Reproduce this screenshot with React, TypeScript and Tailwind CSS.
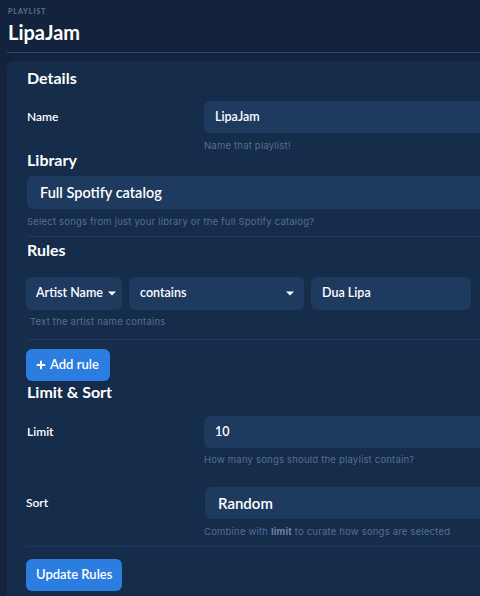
import { Plus } from "lucide-react";

function Caret() {
  return (
    <svg width="8" height="5" viewBox="0 0 8 5" className="shrink-0">
      <path d="M0 0.5 L8 0.5 L4 4.5 Z" fill="#ffffff" />
    </svg>
  );
}

function Helper({ children, className = "" }: { children: React.ReactNode; className?: string }) {
  return (
    <div
      className={`h-[12px] leading-[12px] font-['Inter',sans-serif] text-[9.5px] tracking-[0.2px] text-[#536f96] ${className}`}
    >
      {children}
    </div>
  );
}

function Heading({ children, className = "" }: { children: React.ReactNode; className?: string }) {
  return (
    <div className={`h-[18px] leading-[18px] text-[16px] font-bold text-white ${className}`}>{children}</div>
  );
}

function Divider({ className = "" }: { className?: string }) {
  return <div className={`border-t border-[#1f3a5e] ${className}`} />;
}

export default function App() {
  return (
    <div className="w-[480px] h-[596px] overflow-hidden bg-[#13233d] font-['Lato',sans-serif] text-white">
      <div className="pl-2 pt-[7px]">
        <div className="h-[8px] leading-[8px] text-[7px] font-bold tracking-[0.14em] text-[#5b7396]">
          PLAYLIST
        </div>
        <div className="mt-[5px] h-[24px] leading-[24px] text-[20px] font-bold">LipaJam</div>
      </div>
      <div className="ml-[7px] mt-[8px] border-t border-[#2a4775]" />

      <div className="ml-[7px] mt-2 w-[620px] rounded-md bg-[#152c4b] pl-5 pr-5 pb-6">
        <div className="pt-[8px]">
          <Heading>Details</Heading>
        </div>

        <div className="mt-[14px] grid grid-cols-[177px_1fr] items-center">
          <div className="text-[12px] font-semibold">Name</div>
          <div className="flex h-8 items-center rounded-md bg-[#1e3a5f] pl-[11px] text-[12.5px] font-semibold">
            LipaJam
          </div>
        </div>
        <div className="grid grid-cols-[177px_1fr]">
          <div />
          <Helper className="mt-[7px]">Name that playlist!</Helper>
        </div>

        <Heading className="-mt-px">Library</Heading>
        <div className="mt-[7px] flex h-[33px] items-center rounded-md bg-[#1e3a5f] pl-[13px] text-[14.5px] font-semibold">
          Full Spotify catalog
        </div>
        <Helper className="mt-[7px]">Select songs from just your library or the full Spotify catalog?</Helper>
        <Divider className="mt-[8px]" />

        <Heading className="mt-[4px]">Rules</Heading>
        <div className="mt-[18px] flex h-[33px] gap-[7px] -ml-px">
          <div className="flex w-[96px] items-center gap-[5px] whitespace-nowrap rounded-md bg-[#1e3a5f] pl-[10px] text-[12.5px] font-semibold">
            Artist Name
            <Caret />
          </div>
          <div className="flex w-[175px] items-center justify-between rounded-md bg-[#1e3a5f] pl-[11px] pr-[10px] text-[12.5px] font-semibold">
            contains
            <Caret />
          </div>
          <div className="flex w-[160px] items-center rounded-md bg-[#1e3a5f] pl-[11px] text-[12.5px] font-semibold">
            Dua Lipa
          </div>
        </div>
        <Helper className="mt-[6px] pl-[3px]">Text the artist name contains</Helper>
        <Divider className="mt-[11px]" />

        <button className="mt-[9px] -ml-px flex h-8 items-center gap-[3px] rounded-md bg-[#2b7ddf] pl-[9px] pr-[11px] text-[13px] font-semibold text-white">
          <Plus size={12} strokeWidth={4} />
          Add rule
        </button>

        <Heading className="mt-[2px]">Limit &amp; Sort</Heading>

        <div className="mt-[15px] grid grid-cols-[177px_1fr] items-center">
          <div className="text-[12px] font-semibold">Limit</div>
          <div className="flex h-8 items-center rounded-md bg-[#1e3a5f] pl-[11px] text-[12.5px] font-semibold">
            10
          </div>
        </div>
        <div className="grid grid-cols-[177px_1fr]">
          <div />
          <Helper className="mt-[6px]">How many songs should the playlist contain?</Helper>
        </div>

        <div className="mt-[21px] grid grid-cols-[178px_1fr] items-center">
          <div className="-ml-px text-[12px] font-semibold">Sort</div>
          <div className="flex h-8 items-center rounded-md bg-[#1e3a5f] pl-[13px] text-[15px] font-semibold">
            Random
          </div>
        </div>
        <div className="grid grid-cols-[177px_1fr]">
          <div />
          <Helper className="mt-[7px]">
            Combine with <span className="font-bold text-[#6a83a6]">limit</span> to curate how songs are selected
          </Helper>
        </div>
        <Divider className="mt-[8px]" />

        <button className="mt-[12px] -ml-px flex h-8 items-center rounded-md bg-[#2b7ddf] px-[10px] text-[13px] font-semibold text-white">
          Update Rules
        </button>
      </div>
    </div>
  );
}
